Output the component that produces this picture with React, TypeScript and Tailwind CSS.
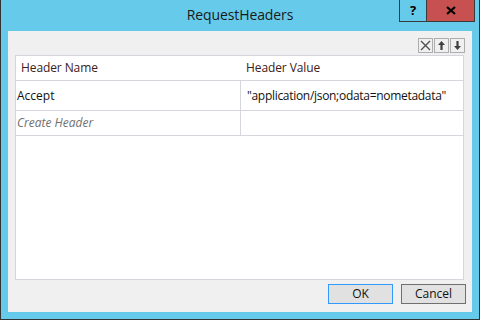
import React from 'react'

const font = { fontFamily: '"Open Sans", "Noto Sans", "Liberation Sans", sans-serif' }

function ToolButton({ children }: { children: React.ReactNode }) {
  return (
    <div className="w-[15px] h-[15px] border border-[#adadad] bg-[#f0f0f0] flex items-center justify-center">
      {children}
    </div>
  )
}

export default function App() {
  return (
    <div
      className="w-[480px] h-[320px] bg-[#66cbea] border-x border-b border-[#333333] flex flex-col overflow-hidden"
      style={font}
    >
      {/* Title bar */}
      <div className="relative h-[31px] shrink-0 flex items-center justify-center">
        <span className="text-[14px] text-[#1a1a1a] leading-none -mt-[1px] tracking-[-0.1px]">RequestHeaders</span>
        <div className="absolute top-0 right-[4px] flex h-[22px] border border-[#3a3a3a] border-t-0">
          <div className="w-[27px] flex items-center justify-center text-[13px] font-bold text-black border-r border-[#3a3a3a]">
            ?
          </div>
          <div className="w-[47px] bg-[#c75050] flex items-center justify-center">
            <svg width="10" height="9" viewBox="0 0 10 9">
              <path d="M1 1 L9 8 M9 1 L1 8" stroke="#000" strokeWidth="2.2" />
            </svg>
          </div>
        </div>
      </div>

      {/* Client area */}
      <div className="flex-1 mx-[7px] mb-[7px] bg-[#f0f0f0] flex flex-col pt-[7px] pl-[7px] pr-[8px] pb-[8px]">
        <div className="flex justify-end gap-[1px] mr-[-1px]">
          <ToolButton>
            <svg width="11" height="11" viewBox="0 0 11 11">
              <path d="M1 1 L10 10 M10 1 L1 10" stroke="#505050" strokeWidth="1.4" />
            </svg>
          </ToolButton>
          <ToolButton>
            <svg width="9" height="11" viewBox="0 0 9 11">
              <path d="M4.5 1 L8 5 L5.6 5 L5.6 10 L3.4 10 L3.4 5 L1 5 Z" fill="#404040" />
            </svg>
          </ToolButton>
          <ToolButton>
            <svg width="9" height="11" viewBox="0 0 9 11">
              <path d="M4.5 10 L8 6 L5.6 6 L5.6 1 L3.4 1 L3.4 6 L1 6 Z" fill="#404040" />
            </svg>
          </ToolButton>
        </div>

        {/* Grid */}
        <div className="mt-[2px] h-[225px] bg-white border border-[#d5d5dc] text-[12px] leading-none">
          <div className="h-[25px] flex items-center border-b border-[#d5d5dc] text-[#3c2020]">
            <div className="w-[225px] shrink-0 pl-[5px] tracking-[-0.1px]">Header Name</div>
            <div className="pl-[5px] tracking-[-0.1px]">Header Value</div>
          </div>
          <div className="h-[30px] flex border-b border-[#d5d5dc] text-[#111111]">
            <div className="w-[225px] shrink-0 pl-[1px] flex items-center border-r border-[#d5d5dc]">Accept</div>
            <div className="pl-[6px] flex items-center whitespace-nowrap tracking-[-0.3px]">
              "application/json;odata=nometadata"
            </div>
          </div>
          <div className="h-[25px] flex border-b border-[#d5d5dc]">
            <div className="w-[225px] shrink-0 pl-[1px] flex items-center border-r border-[#d5d5dc] italic text-[#707070]">
              Create Header
            </div>
            <div />
          </div>
        </div>

        {/* Buttons */}
        <div className="mt-auto flex justify-end gap-[8px] mr-[-2px] text-[12px]">
          <button className="w-[65px] h-[20px] bg-[#e1e1e1] border border-[#3399ff] text-[#111111] leading-none">
            OK
          </button>
          <button className="w-[65px] h-[20px] bg-[#e1e1e1] border border-[#707070] text-[#111111] leading-none">
            Cancel
          </button>
        </div>
      </div>
    </div>
  )
}
